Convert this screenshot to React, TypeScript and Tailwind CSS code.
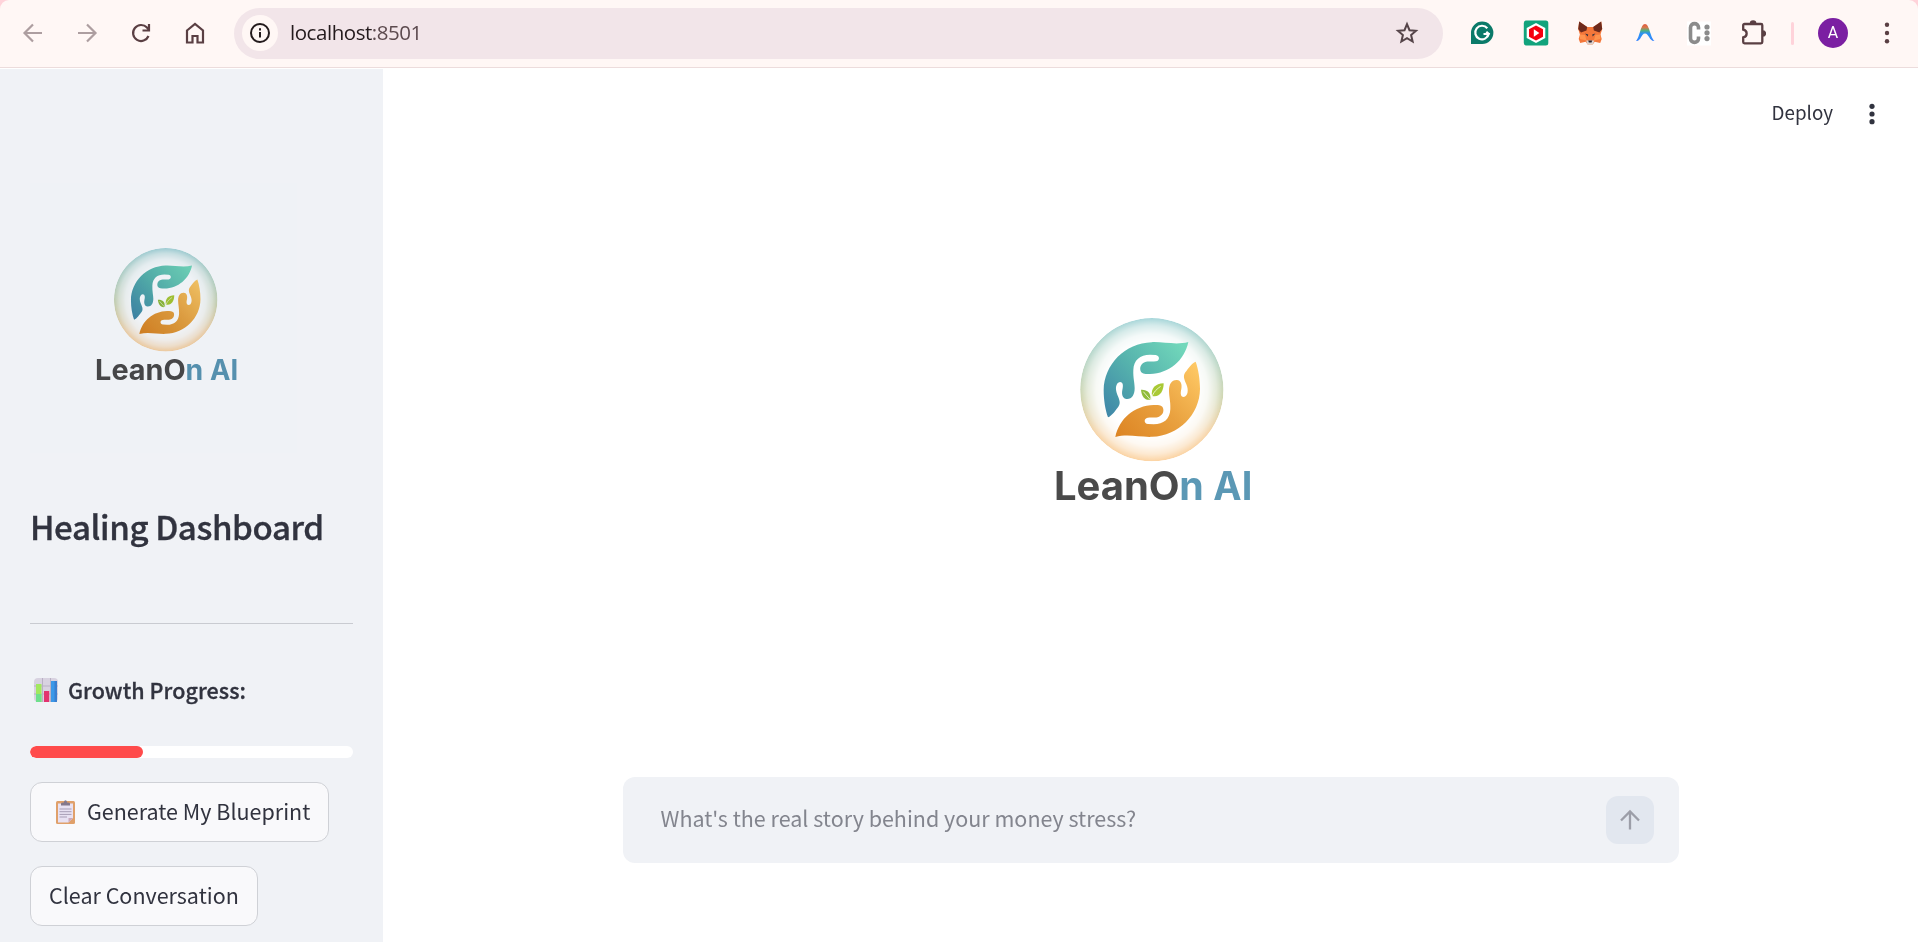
import { useId, useState } from "react"
import type { ReactNode } from "react"

const HAND =
  "M445,126 C408,136 372,125 335,126.500 C255,129 192,193 191,270 C191,300 196,330 204,352 C216,347 226,332 235,320 C243,309 238,298 232,284 C224,265 228,248 240,246 C250,247 250,258 247,270 C244,285 249,296 260,297 C276,298 284,284 284,265 C284,248 279,233 280,210 C281,180 300,164 330,164 L347,165 C360,167 360,182 348,184 C335,186 325,183 314,187 C301,192 298,206 303,215 C307,222 318,222 330,222 C388,220 433,182 445,126 Z"

function Logo({ className }: { className?: string }) {
  const id = useId()

  return (
    <svg viewBox="0 0 690 660" className={className}>
      <defs>
        <linearGradient id={`${id}-teal`} x1="200" y1="345" x2="430" y2="135" gradientUnits="userSpaceOnUse">
          <stop offset="0" stopColor="#3f87a8" />
          <stop offset="0.5" stopColor="#56b3ad" />
          <stop offset="1" stopColor="#72d8bb" />
        </linearGradient>
        <linearGradient id={`${id}-gold`} x1="445" y1="126" x2="204" y2="352" gradientUnits="userSpaceOnUse">
          <stop offset="0" stopColor="#dc8322" />
          <stop offset="0.5" stopColor="#e9a13f" />
          <stop offset="1" stopColor="#ffca66" />
        </linearGradient>
        <linearGradient id={`${id}-ring`} x1="0" y1="0" x2="0" y2="1">
          <stop offset="0" stopColor="#a6d6da" />
          <stop offset="0.3" stopColor="#b9d6c6" />
          <stop offset="0.55" stopColor="#ced5b0" />
          <stop offset="0.8" stopColor="#f6d3a6" />
          <stop offset="1" stopColor="#fcd3a2" />
        </linearGradient>
        <radialGradient id={`${id}-fade`}>
          <stop offset="0.64" stopColor="#fff" stopOpacity="0" />
          <stop offset="0.78" stopColor="#fff" stopOpacity="0.14" />
          <stop offset="0.9" stopColor="#fff" stopOpacity="0.5" />
          <stop offset="1" stopColor="#fff" stopOpacity="1" />
        </radialGradient>
        <mask id={`${id}-mask`}>
          <circle cx="335.500" cy="269" r="215" fill={`url(#${id}-fade)`} />
        </mask>
      </defs>
      <circle cx="335.500" cy="269" r="215" fill={`url(#${id}-ring)`} mask={`url(#${id}-mask)`} />
      <path d={HAND} fill={`url(#${id}-teal)`} />
      <path d={HAND} fill={`url(#${id}-gold)`} transform="rotate(180 335.500 268.500)" />
      <path d="M303,269 C322,268 334,278 331,299 C315,302 305,290 303,269 Z" fill="#8fbb3b" />
      <path d="M371,250 C346,251 332,265 336,288 C358,294 371,275 371,250 Z" fill="#a9c935" />
      <path d="M310,275 L330,298 M362,259 C346,270 336,282 334,300" stroke="#f4f9e4" strokeWidth="2.500" fill="none" />
      <g fontFamily="Inter, sans-serif" fontWeight="700" fontSize="118">
        <text x="42" y="601" textLength="377" lengthAdjust="spacingAndGlyphs" fill="#4a4a4a">
          LeanO
        </text>
        <text x="418" y="601" fill="#5b98b5">
          n
        </text>
        <text x="520" y="601" textLength="117" lengthAdjust="spacingAndGlyphs" fill="#5b98b5">
          AI
        </text>
      </g>
    </svg>
  )
}

function NavButton({ children, disabled }: { children: ReactNode; disabled?: boolean }) {
  return (
    <button disabled={disabled} className="flex w-[54px] justify-center text-[#5a3f43] disabled:text-[#ad9ea0]">
      <svg width="24" height="24" viewBox="0 0 24 24" fill="none" stroke="currentColor" strokeWidth="2.200">
        {children}
      </svg>
    </button>
  )
}

function Extension({ children }: { children: ReactNode }) {
  return (
    <div className="flex w-[54.2px] justify-center">
      <svg width="26" height="26" viewBox="0 0 26 26" fill="none">
        {children}
      </svg>
    </div>
  )
}

function BrowserBar() {
  return (
    <div className="bg-[#ffd3da]">
      <header className="flex h-[68px] items-center rounded-t-[9px] border-b border-[#ecdcdc] bg-[#fff7f5] pb-px pl-1.5">
        <NavButton disabled>
          <path d="M21 12H4M12 3.500 3.500 12l8.500 8.500" />
        </NavButton>
        <NavButton disabled>
          <path d="M3 12h17M12 3.500l8.500 8.500-8.500 8.500" />
        </NavButton>
        <NavButton>
          <path d="M19.500 15A8 8 0 1 1 18 6.600L20 9" />
          <path d="M20 3v6.500h-6.500" />
        </NavButton>
        <NavButton>
          <path d="M4 9.500 12 3l8 6.500V21.500h-5.500v-6.500h-5v6.500H4z" />
        </NavButton>

        <div className="ml-3 flex h-[51px] w-[1209px] items-center rounded-full bg-[#f2e5e9] pl-2 pr-6">
          <div className="flex size-9 items-center justify-center rounded-full bg-[#fff7f5]">
            <svg width="22" height="22" viewBox="0 0 22 22" fill="none" stroke="#231a1c" strokeWidth="2">
              <circle cx="11" cy="11" r="9" />
              <path d="M11 10v5.500M11 6.200v2.200" />
            </svg>
          </div>
          <span className="ml-3 pb-0.5 font-['Open_Sans',sans-serif] text-[20.5px] tracking-[-0.45px] text-[#231a1c]">
            localhost<span className="text-[#5c4a4e]">:8501</span>
          </span>
          <svg className="ml-auto" width="24" height="24" viewBox="0 0 24 24" fill="none" stroke="#554449" strokeWidth="2">
            <path d="m12 3.200 2.500 6 6.500.6-4.900 4.300 1.500 6.400L12 17.100l-5.600 3.400 1.500-6.400L3 9.800l6.500-.6z" />
          </svg>
        </div>

        <div className="ml-3 flex">
          <Extension>
            <path d="M2 24V13A11.200 11.200 0 1 1 13 24z" fill="#0b7a69" />
            <path d="M18.300 8.200A6.800 6.800 0 1 0 19.700 14h-5.200M17.300 11.700l2.500 2.300-2 3" stroke="#fff" strokeWidth="2.200" />
          </Extension>
          <Extension>
            <rect x="0.800" y="0.500" width="24.500" height="25" rx="2.500" fill="#12a37c" />
            <path d="M13 3l9.300 5v10L13 23l-9.300-5V8z" fill="#fff" />
            <path d="M13 5.500l7 3.700v7.600l-7 3.700-7-3.700V9.200z" fill="#f5000f" />
            <path d="M10.800 9.300v7.400l5.600-3.700z" fill="#fff" />
          </Extension>
          <Extension>
            <path
              d="M2.200 1.500l8 5.500h6l8-5.500 1 7.500-1.700 5.500 1.200 4.500-1.500 4-5.500-1.200-2 2.700h-5l-2-2.700L3.200 23l-1.500-4 1.200-4.500L1.200 9z"
              fill="#f4773a"
            />
            <path d="M2.200 1.500l8 5.500-.7 3.500L4 12.500 1.200 9z M24.200 1.500l-8 5.500.7 3.500 5.500 2L25.200 9z" fill="#6d2a1c" />
            <path d="M3 14.500l5 .5 1.500 5.500-6.500-1.500z M23.400 14.500l-5 .5-1.500 5.500 6.500-1.500z" fill="#ff934e" />
            <path d="M8 13.500l3.200 1-.5 2z M18.400 13.500l-3.200 1 .5 2z" fill="#33343f" />
            <path d="M9.200 20.500h8l-1.200 4h-5.600z" fill="#dcd2cd" />
            <path d="M11.200 20.500h4l-.7 2h-2.600z" fill="#2c2430" />
          </Extension>
          <Extension>
            <defs>
              <linearGradient id="peak" x1="0" y1="0" x2="0" y2="1">
                <stop offset="0" stopColor="#e4583d" />
                <stop offset="0.2" stopColor="#d7784c" />
                <stop offset="0.38" stopColor="#52b17e" />
                <stop offset="0.55" stopColor="#2b93ef" />
                <stop offset="1" stopColor="#3584ff" />
              </linearGradient>
            </defs>
            <path
              d="M4 21C8 17 8.500 4 13 4s5 13 9.500 17c-5 .7-5.500-7.500-9.500-7.500S9 21.700 4 21z"
              fill="url(#peak)"
            />
          </Extension>
          <Extension>
            <path d="M1 1.500h24v24H1z" fill="#fff" />
            <path d="M12.500 9.500V7.500c0-5.200-8-5.200-8 0v11c0 5.200 8 5.200 8 0v-2" stroke="#8b8b8b" strokeWidth="3.600" />
            <circle cx="21" cy="7" r="2.600" fill="#8b8b8b" />
            <circle cx="21" cy="12.800" r="2.600" fill="#8b8b8b" />
            <circle cx="21" cy="18.600" r="2.600" fill="#8b8b8b" />
          </Extension>
          <Extension>
            <path
              d="M4.500 4H21a1.300 1.300 0 0 1 1.300 1.300V22a1.300 1.300 0 0 1-1.300 1.300H4.500A1.300 1.300 0 0 1 3.200 22v-4.600c4.600-.8 4.600-7 0-7.800V5.300A1.300 1.300 0 0 1 4.500 4z"
              stroke="#5a3f43"
              strokeWidth="2.300"
            />
            <path d="M9.800 3.500a3.300 3.300 0 0 1 6.600 0zM22.800 10.200a3.300 3.300 0 0 1 0 6.600z" fill="#5a3f43" />
          </Extension>
        </div>

        <div className="ml-[10.8px] h-[23px] w-[3px] rounded-sm bg-[#ffd3da]" />
        <div className="ml-6 flex size-[30px] items-center justify-center rounded-full bg-[#7b1fa2] font-[Roboto,sans-serif] text-[16px] text-white">
          A
        </div>
        <svg className="ml-9" width="6" height="22" viewBox="0 0 6 22" fill="#5a3f43">
          <circle cx="3" cy="2.700" r="2.200" />
          <circle cx="3" cy="11" r="2.200" />
          <circle cx="3" cy="19.300" r="2.200" />
        </svg>
      </header>
    </div>
  )
}

function ChartIcon() {
  return (
    <svg width="24" height="24" viewBox="0 0 24 24">
      <rect width="24" height="24" rx="4" fill="#d8d2e0" />
      <path d="M0 8h24M0 16h24M8.500 0v24M16.500 0v24" stroke="#b9b0c4" strokeWidth="1" />
      <path d="M2 6h5.500v18H2z" fill="#a2e85f" />
      <path d="M2 16h5.500v8H2z" fill="#6fe08c" />
      <path d="M10 13h5.200v11H10z" fill="#e2336f" />
      <path d="M17 3h6v21h-6z" fill="#3b98e8" />
      <path d="M20.500 3H23v21h-2.500z" fill="#3a7fd0" />
    </svg>
  )
}

function ClipboardIcon() {
  return (
    <svg width="19" height="24" viewBox="0 0 19 24">
      <rect y="1" width="19" height="23" rx="1.500" fill="#e0a06a" />
      <path d="M2 3.500h15V18l-4.500 4.500H2z" fill="#e8e1f2" />
      <path d="M17 18l-4.500 4.500V18z" fill="#c9a9bd" />
      <path d="M5 5.500V3.500c0-1 1.500-1 3-1 0-3 3-3 3 0 1.500 0 3 0 3 1v2z" fill="#84788c" />
      <path d="M3.500 9h12M3.500 11.700h12M3.500 14.400h12M3.500 17h7.500" stroke="#a79db5" strokeWidth="1" />
    </svg>
  )
}

function SidebarButton({ children, onClick }: { children: ReactNode; onClick?: () => void }) {
  return (
    <button
      onClick={onClick}
      className="flex h-[60px] items-center whitespace-nowrap rounded-xl border border-[#cfd1d6] bg-[#f9f9fb] px-[18px] pb-px text-[21.5px]"
    >
      {children}
    </button>
  )
}

function Sidebar({ progress, onClear }: { progress: number; onClear: () => void }) {
  return (
    <aside className="flex w-[383px] shrink-0 flex-col items-start bg-[#f0f2f6] pl-[30px] pr-[30px] pt-[114px]">
      <div className="h-[270px] w-[267px] bg-[#eff2f6] pl-[55px] pt-[52px]">
        <Logo className="h-[159px] w-[166px] mix-blend-multiply" />
      </div>
      <h1 className="mt-[51px] whitespace-nowrap text-[33.1px] font-medium leading-[44px] tracking-[-0.4px] [-webkit-text-stroke:0.35px]">
        Healing Dashboard
      </h1>
      <hr className="mt-[75px] w-full border-[#c9cbd1]" />
      <div className="mt-[51px] flex h-[30px] items-center pl-1">
        <ChartIcon />
        <span className="ml-2.5 whitespace-nowrap text-[21.5px] font-medium leading-[30px] tracking-[0.05px] [-webkit-text-stroke:0.3px]">
          Growth Progress:
        </span>
      </div>
      <div className="mt-[41px] h-3 w-full shrink-0 overflow-hidden rounded-full bg-white">
        <div className="h-full rounded-full bg-[#ff4b4b]" style={{ width: `${progress}%` }} />
      </div>
      <div className="mt-6 flex flex-col items-start gap-6">
        <SidebarButton>
          <span className="ml-[7px] mr-3">
            <ClipboardIcon />
          </span>
          Generate My Blueprint
        </SidebarButton>
        <SidebarButton onClick={onClear}>Clear Conversation</SidebarButton>
      </div>
    </aside>
  )
}

export default function App() {
  const [message, setMessage] = useState("")

  return (
    <div className="flex h-[942px] w-[1918px] flex-col overflow-hidden bg-white font-['Noto_Sans_CJK_SC',sans-serif] text-[#31333f]">
      <BrowserBar />
      <div className="mt-px flex min-h-0 flex-1">
        <Sidebar progress={35} onClear={() => setMessage("")} />
        <main className="flex flex-1 flex-col items-center">
          <div className="flex h-[90px] w-full items-center justify-end pr-[43px]">
            <button className="pb-1 text-[18.8px]">Deploy</button>
            <svg className="ml-9" width="6" height="22" viewBox="0 0 6 22" fill="#31333f">
              <circle cx="3" cy="3.300" r="2.600" />
              <circle cx="3" cy="11" r="2.600" />
              <circle cx="3" cy="18.700" r="2.600" />
            </svg>
          </div>
          <Logo className="ml-[9px] mt-[141px] h-[220px] w-[230px]" />
          <form className="mt-[257px] flex h-[86px] w-[1056px] items-center rounded-xl bg-[#f0f2f6] pl-[38px] pr-[25px]">
            <input
              value={message}
              onChange={(e) => setMessage(e.target.value)}
              placeholder="What's the real story behind your money stress?"
              className="h-12 flex-1 bg-transparent pb-1.5 text-[21.5px] outline-none placeholder:text-[#83858e]"
            />
            <button type="button" className="flex size-12 items-center justify-center rounded-xl bg-[#e2e7ef]">
              <svg width="24" height="24" viewBox="0 0 24 24" fill="none" stroke="#9c9ea8" strokeWidth="2.300">
                <path d="M12 21.500V3.500M3 12.500l9-9 9 9" />
              </svg>
            </button>
          </form>
        </main>
      </div>
    </div>
  )
}
